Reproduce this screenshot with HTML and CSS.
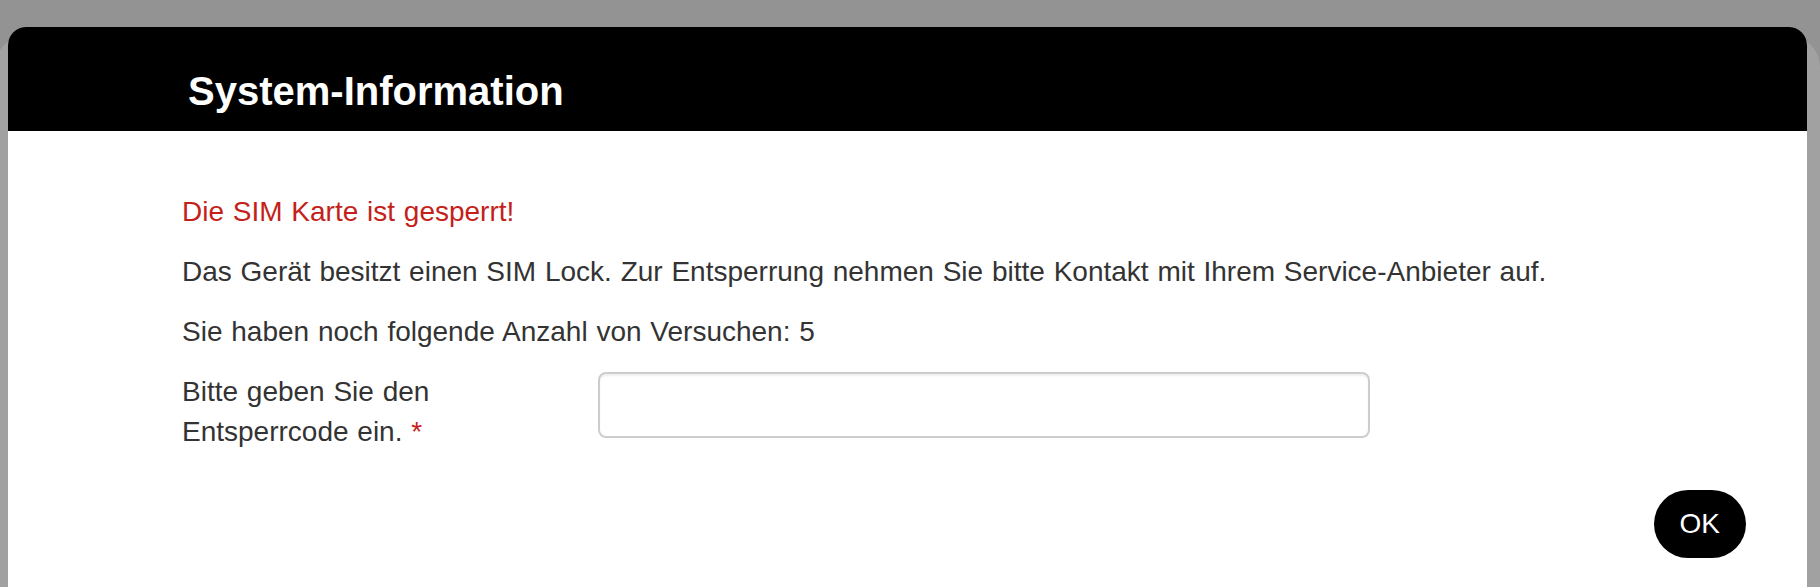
FILE: index.html
```html
<!DOCTYPE html>
<html lang="de">
<head>
  <meta charset="UTF-8">
  <meta name="viewport" content="width=device-width, initial-scale=1.0">
  <title>System-Information</title>
  <link rel="stylesheet" href="styles.css">
</head>
<body>
  <div class="modal">
    <div class="modal-header">
      <h1 class="modal-title">System-Information</h1>
    </div>
    <div class="modal-body">
      <p class="error">Die SIM Karte ist gesperrt!</p>
      <p>Das Gerät besitzt einen SIM Lock. Zur Entsperrung nehmen Sie bitte Kontakt mit Ihrem Service-Anbieter auf.</p>
      <p>Sie haben noch folgende Anzahl von Versuchen: 5</p>
      <div class="form-row">
        <label for="unlock-code">Bitte geben Sie den Entsperrcode ein.&nbsp;<span class="required">*</span></label>
        <input type="text" id="unlock-code" class="text-input">
      </div>
    </div>
    <div class="modal-footer">
      <button id="ok-btn" class="btn">OK</button>
    </div>
  </div>
</body>
</html>
```

FILE: styles.css
```css
body {
  margin: 0;
  height: 100vh;
  overflow: hidden;
  background-color: #939393;
  font-family: 'Liberation Sans', Arial, Helvetica, sans-serif;
  color: #333;
}

.modal {
  margin: 27px 13px 0 8px;
  min-height: 600px;
  background-color: #fff;
  border-radius: 18px 18px 0 0;
  box-shadow: 0 22px 0 13px #a1a1a1;
}

.modal-header {
  background-color: #000;
  border-radius: 18px 18px 0 0;
  padding: 42px 0 18px 180px;
}

.modal-title {
  margin: 0;
  color: #fff;
  font-size: 40px;
  line-height: 44px;
  font-weight: bold;
}

.modal-body {
  padding: 61px 0 0 174px;
  font-size: 28px;
  line-height: 40px;
  word-spacing: 1px;
}

.modal-body p {
  margin: 0 0 20px;
}

.error {
  color: #c41f1a;
}

.form-row {
  display: flex;
  align-items: flex-start;
}

.form-row label {
  width: 390px;
  padding-right: 26px;
  flex-shrink: 0;
}

.required {
  color: #c41f1a;
}

.text-input {
  width: 772px;
  height: 66px;
  box-sizing: border-box;
  border: 2px solid #cdcdcd;
  border-radius: 8px;
  box-shadow: inset 0 2px 2px rgba(0, 0, 0, 0.06);
  font-size: 28px;
  padding: 0 16px;
}

.modal-footer {
  display: flex;
  justify-content: flex-end;
  padding: 38px 61px 0 0;
}

.btn {
  height: 68px;
  padding: 0 26px;
  border: none;
  border-radius: 34px;
  background-color: #000;
  color: #fff;
  font-family: 'Liberation Sans', Arial, Helvetica, sans-serif;
  font-size: 28px;
  cursor: pointer;
}
```
